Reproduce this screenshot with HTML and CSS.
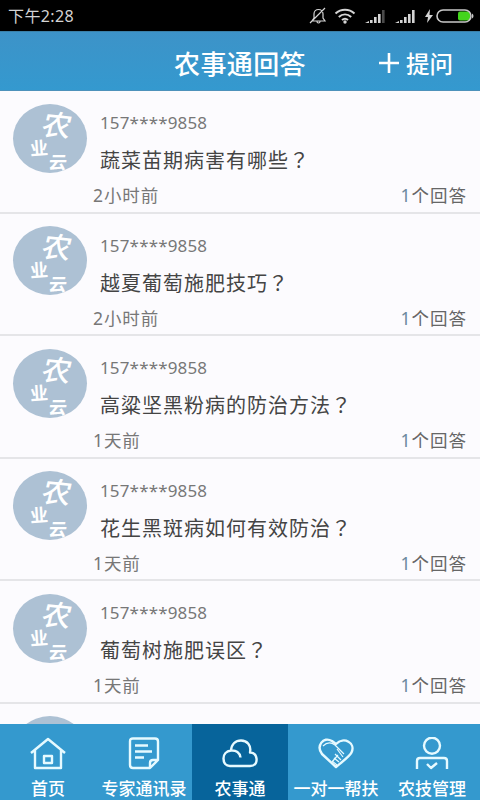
FILE: index.html
```html
<!DOCTYPE html>
<html lang="zh-CN">
<head>
<meta charset="utf-8">
<title>农事通回答</title>
<link rel="stylesheet" href="styles.css">
</head>
<body>
<svg class="defs" width="0" height="0">
  <symbol id="signal" viewBox="0 0 20 14"><path d="M0 14l4-2v2zM5 11h2.600v3H5zM9 8h2.600v6H9zM13 5h2.600v9H13zM17 1h2.600v13H17z"/></symbol>
  <symbol id="signal-weak" viewBox="0 0 20 14"><path d="M0 14l4-2v2zM5 11h2.600v3H5zM9 8h2.600v6H9zM13 5h2.600v9H13z"/><path d="M17 1h2.600v13H17z" opacity=".35"/></symbol>
</svg>
<div class="app">
  <div class="status">
    <span class="clock">下午2:28</span>
    <svg class="mute" viewBox="0 0 18 18"><path d="M3 14h13l-2-3V7c0-3-2-4.500-4.500-4.500S5 4 5 7v4zM8 14.500c0 2 3 2 3 0M1 16L16 1"/></svg>
    <svg class="wifi" viewBox="0 0 22 16"><path d="M1.500 5.500c5.500-5 13.500-5 19 0M4.800 9c3.700-3.300 8.700-3.300 12.400 0M8 12c1.800-1.500 4.200-1.500 6 0"/><circle cx="11" cy="14" r="1.700"/></svg>
    <svg class="signal"><use href="#signal-weak"/></svg>
    <svg class="signal"><use href="#signal"/></svg>
    <svg class="bolt" viewBox="0 0 8 14"><path d="M5 0L0 8h3L2 14l6-8H4.500z"/></svg>
    <svg class="battery" viewBox="0 0 38 14"><rect x="22" y="2.500" width="12" height="9" rx="2" fill="#43d51c"/><rect x="1" y="1" width="34" height="12" rx="6" fill="none" stroke="#c9c9c9" stroke-width="1.600"/><path d="M36 4.500c2 1 2 4 0 5z" fill="#c9c9c9"/></svg>
  </div>
  <header class="header">
    <h1>农事通回答</h1>
    <div class="ask"><svg viewBox="0 0 22 22"><path d="M11 1v20M1 11h20"/></svg><span>提问</span></div>
  </header>
  <main class="list">
    <article class="item">
      <div class="avatar"><span class="a">农</span><span class="b">业</span><span class="c">云</span></div>
      <div class="name">157****9858</div>
      <div class="question">蔬菜苗期病害有哪些<span class="mark" lang="zh-TW">？</span></div>
      <div class="meta"><span>2小时前</span><span class="count"><b>1</b>个回答</span></div>
    </article>
    <article class="item">
      <div class="avatar"><span class="a">农</span><span class="b">业</span><span class="c">云</span></div>
      <div class="name">157****9858</div>
      <div class="question">越夏葡萄施肥技巧<span class="mark" lang="zh-TW">？</span></div>
      <div class="meta"><span>2小时前</span><span class="count"><b>1</b>个回答</span></div>
    </article>
    <article class="item">
      <div class="avatar"><span class="a">农</span><span class="b">业</span><span class="c">云</span></div>
      <div class="name">157****9858</div>
      <div class="question">高粱坚黑粉病的防治方法<span class="mark" lang="zh-TW">？</span></div>
      <div class="meta"><span>1天前</span><span class="count"><b>1</b>个回答</span></div>
    </article>
    <article class="item">
      <div class="avatar"><span class="a">农</span><span class="b">业</span><span class="c">云</span></div>
      <div class="name">157****9858</div>
      <div class="question">花生黑斑病如何有效防治<span class="mark" lang="zh-TW">？</span></div>
      <div class="meta"><span>1天前</span><span class="count"><b>1</b>个回答</span></div>
    </article>
    <article class="item">
      <div class="avatar"><span class="a">农</span><span class="b">业</span><span class="c">云</span></div>
      <div class="name">157****9858</div>
      <div class="question">葡萄树施肥误区<span class="mark" lang="zh-TW">？</span></div>
      <div class="meta"><span>1天前</span><span class="count"><b>1</b>个回答</span></div>
    </article>
    <article class="item">
      <div class="avatar"></div>
    </article>
  </main>
  <nav class="tabs">
    <a class="tab"><svg viewBox="0 0 36 34"><path d="M1 16L18 2l17 14M5 13.500V31h26V13.500M14 19h8v7h-8z"/></svg><span>首页</span></a>
    <a class="tab"><svg viewBox="0 0 36 34"><path d="M24 31H7c-2 0-3-1-3-3V4.500c0-2 1-3 3-3h22c2 0 3 1 3 3V23l-8 8v-5c0-2 1-3 3-3h5M9 8.500h13M9 14.500h17M9 20.500h9"/></svg><span>专家通讯录</span></a>
    <a class="tab active"><svg viewBox="0 0 36 34"><path d="M8 29H28C33.500 29 35 25 34.500 21.500C34 18 31.500 15.500 28 15.500C29.500 8 25 3.500 19 3.500C13.500 3.500 9.500 7 9 13.500C4 14 1.500 17.500 1.500 21.500C1.500 26 4 29 8 29zM9 13.500C14 13 18 15.500 18.500 20.500"/></svg><span>农事通</span></a>
    <a class="tab"><svg viewBox="0 0 36 34"><path d="M18 30L4 17C-2 9 5-1 14 4l4 3c8-8 20-1 15.500 8.500C32 19 24 25 18 30z"/><path class="fine" d="M5 9c4-4 8-4 12-1l9 9M19 12l6 8M17 17l6 6M16 21l5 4M14 24l5 4M14 25l6-7"/></svg><span>一对一帮扶</span></a>
    <a class="tab"><svg viewBox="0 0 36 34"><circle cx="18" cy="8.700" r="8"/><path d="M3 32V24c0-2 1-3 3-3h24c2 0 3 1 3 3v8M13 27l4 4 6-5"/></svg><span>农技管理</span></a>
  </nav>
</div>
</body>
</html>
```
FILE: styles.css
```css
* { box-sizing: border-box; }
body { margin: 0; font-family: "Noto Sans", "Noto Sans CJK SC", sans-serif; }
.defs { display: block; }
.app { width: 480px; height: 800px; display: flex; flex-direction: column; overflow: hidden; background: #fcfbfe; }
.status { height: 31px; flex: none; background: #000; color: #d4d4d4; display: flex; align-items: center; padding: 0 6px 0 8px; }
.clock { font-size: 16px; line-height: 31px; letter-spacing: .4px; margin-right: auto; padding-top: 1px; }
.status svg { flex: none; fill: #d4d4d4; }
.status .mute { width: 18px; height: 18px; margin-right: 7px; fill: none; stroke: #d4d4d4; stroke-width: 1.2; }
.status .wifi { width: 22px; height: 16px; margin-right: 9px; }
.wifi path { fill: none; stroke: #d4d4d4; stroke-width: 2; }
.status .signal { width: 20px; height: 14px; margin-right: 10px; }
.status .bolt { width: 8px; height: 14px; margin-right: 3px; }
.status .battery { width: 38px; height: 14px; }
.header { height: 60px; flex: none; display: grid; grid-template-columns: 1fr auto 1fr; align-items: center; color: #fff; background: linear-gradient(#3d93c8, #3499cf); border-top: 1px solid #3a80a8; border-bottom: 1px solid #4d92bb; }
h1 { grid-column: 2; margin: 0; font-size: 26px; font-weight: 500; line-height: 60px; letter-spacing: .4px; padding-top: 2px; }
.ask { justify-self: end; display: flex; align-items: center; gap: 6px; padding-right: 27px; font-size: 23.5px; font-weight: 500; }
.ask svg { width: 22px; height: 22px; fill: none; stroke: #fff; stroke-width: 2.6; }
.list { flex: 1; min-height: 0; overflow: hidden; }
.item { height: 122.5px; display: grid; grid-template-columns: 87px 1fr; grid-template-rows: 20px 54px 20px; padding: 22px 14px 0 13px; border-bottom: 2px solid #e5e5e8; }
.avatar { grid-row: 1 / 3; position: relative; width: 74px; height: 69px; margin-top: -9.5px; border-radius: 50%; background: #adc1d4; color: #fff; font-family: "Noto Sans CJK SC", sans-serif; font-weight: 500; }
.avatar span { position: absolute; line-height: 1; }
.avatar .a { left: 30px; top: 5px; font-size: 29px; transform: rotate(6deg) skewX(-8deg); }
.avatar .b { left: 17px; top: 34px; font-size: 18px; font-weight: 700; transform: rotate(-4deg); }
.avatar .c { left: 36px; top: 48px; font-size: 18px; font-weight: 700; transform: skewX(-8deg); }
.name { font-size: 17px; line-height: 20px; color: #777; letter-spacing: .15px; }
.question { font-size: 20px; line-height: 54px; color: #444; letter-spacing: 1px; white-space: nowrap; }
.mark { font-family: "Noto Sans CJK TC", sans-serif; }
.meta { grid-column: 1 / 3; display: flex; justify-content: space-between; padding-left: 80px; margin-top: -2px; font-size: 17.5px; line-height: 20px; color: #777; letter-spacing: .9px; }
.count { color: #666; letter-spacing: 1px; margin-right: -1px; }
.count b { font-weight: 400; color: #6d8a9e; }
.tabs { height: 76px; flex: none; display: grid; grid-template-columns: repeat(5, 1fr); background: #3499ce; color: #fff; }
.tab { display: flex; flex-direction: column; align-items: center; padding-top: 13px; }
.tab.active { background: #07649b; }
.tab svg { width: 36px; height: 34px; fill: none; stroke: #e6faff; stroke-width: 2.4; stroke-linejoin: round; }
.tab svg .fine { stroke-width: 1.2; }
.tab span { font-size: 17px; font-weight: 500; line-height: 20px; margin-top: 8px; white-space: nowrap; }
```
